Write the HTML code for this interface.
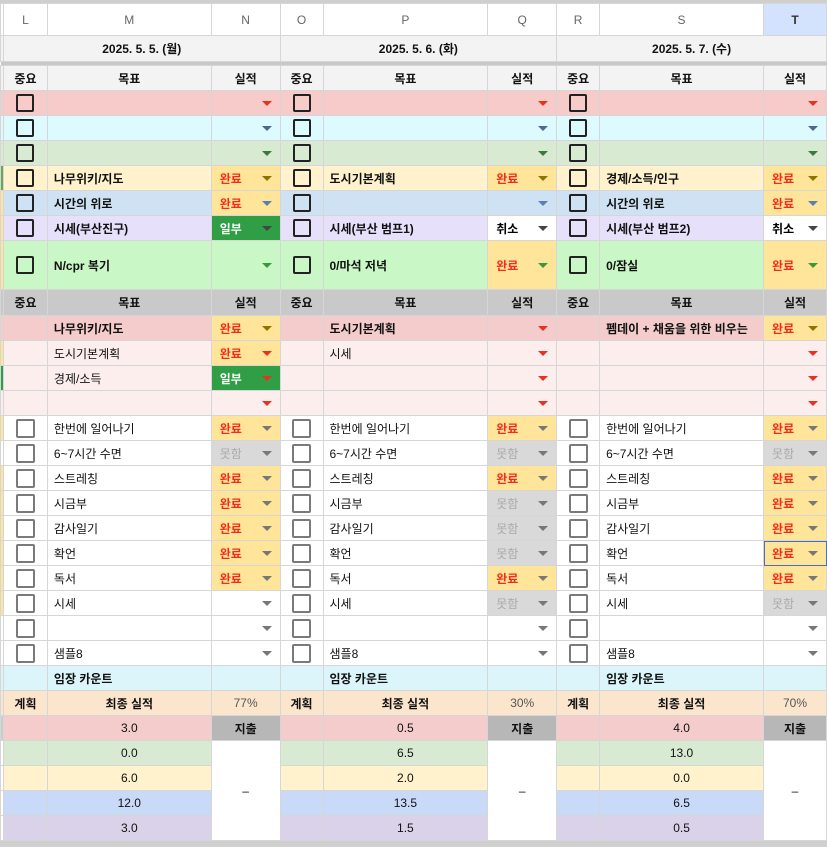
<!DOCTYPE html>
<html><head><meta charset="utf-8"><style>
body{margin:0;background:#cfcfcf;width:827px;height:844px;overflow:hidden;font-family:"Liberation Sans","Noto Sans CJK KR",sans-serif}
table{border-collapse:collapse;table-layout:fixed;margin-top:3px;background:#fff}
td{padding:0;border:1px solid #d6d6d6;font-size:12px;white-space:nowrap;overflow:hidden;color:#111}
.c{text-align:center}
.g{padding-left:6px}
.b{font-weight:bold}
.s{position:relative;padding-left:8px;font-weight:bold}
.s i{position:absolute;right:8px;top:50%;margin-top:-2px;border-left:5px solid transparent;border-right:5px solid transparent;border-top:5px solid var(--a,#777)}
.ok{background:#ffe599;color:#f52a1a;--a:#8b7500}
.no{background:#d9d9d9;color:#aaa;--a:#777;font-weight:normal}
.pt{background:#2f9e44;color:#fff;--a:#111}
.cx{background:#fff;color:#000;--a:#777}
.k{display:inline-block;width:14px;height:14px;border:2px solid #222;border-radius:2px;vertical-align:middle}
.k2{display:inline-block;width:15px;height:15px;border:2px solid #7a7a7a;border-radius:2px;vertical-align:middle}
.hd td{background:#f3f3f3;font-weight:bold;text-align:center}
.hd2 td{background:#c9c9c9;font-weight:bold;text-align:center}
.pk td{background:#f8cbcb;--a:#e8321f}
.cy td{background:#ddfbff;--a:#4a6b8a}
.gr td{background:#d9ead3;--a:#3a7a3a}
.ye td{background:#fff2cc;--a:#8b7500}
.bl td{background:#cfe2f3;--a:#5a7fb0}
.pu td{background:#e6e0fa;--a:#444}
.tg td{background:#c9f7c6;--a:#3a9a3a}
.lp td{background:#fdeeee;--a:#e8321f}
.wh td{background:#fff;--a:#777}
.im td{background:#dcf5fb}
.pe td{background:#fce5cd;font-weight:bold;text-align:center}
tr td.ok{background:#ffe599}
tr td.no{background:#d9d9d9}
tr td.pt{background:#2f9e44}
tr td.cx{background:#fff}
.p1 td{background:#f4cccc}
tr.pk2 td.pkc{background:#f4cccc}
</style></head><body>
<table>
<colgroup><col style="width:3px"><col style="width:44px"><col style="width:164px"><col style="width:69px"><col style="width:43px"><col style="width:165px"><col style="width:69px"><col style="width:43px"><col style="width:164px"><col style="width:63px"></colgroup>
<tr style="height:32px;color:#666"><td></td><td class="c" style="color:#666">L</td><td class="c" style="color:#666">M</td><td class="c" style="color:#666">N</td><td class="c" style="color:#666">O</td><td class="c" style="color:#666">P</td><td class="c" style="color:#666">Q</td><td class="c" style="color:#666">R</td><td class="c" style="color:#666">S</td><td class="c" style="background:#d3e3fd;color:#333;font-weight:bold">T</td></tr>
<tr class="hd" style="height:26px"><td></td><td colspan="3">2025. 5. 5. (월)</td><td colspan="3">2025. 5. 6. (화)</td><td colspan="3">2025. 5. 7. (수)</td></tr>
<tr style="height:4px"><td colspan="10" style="background:#c8c8c8;border:0"></td></tr>
<tr class="hd" style="height:25px"><td></td><td>중요</td><td>목표</td><td>실적</td><td>중요</td><td>목표</td><td>실적</td><td>중요</td><td>목표</td><td>실적</td></tr>
<tr class="pk" style="height:25px"><td></td><td class="c"><b class="k"></b></td><td></td><td class="s"><i></i></td><td class="c"><b class="k"></b></td><td></td><td class="s"><i></i></td><td class="c"><b class="k"></b></td><td></td><td class="s"><i></i></td></tr>
<tr class="cy" style="height:25px"><td></td><td class="c"><b class="k"></b></td><td></td><td class="s"><i></i></td><td class="c"><b class="k"></b></td><td></td><td class="s"><i></i></td><td class="c"><b class="k"></b></td><td></td><td class="s"><i></i></td></tr>
<tr class="gr" style="height:25px"><td></td><td class="c"><b class="k"></b></td><td></td><td class="s"><i></i></td><td class="c"><b class="k"></b></td><td></td><td class="s"><i></i></td><td class="c"><b class="k"></b></td><td></td><td class="s"><i></i></td></tr>
<tr class="ye" style="height:25px"><td style="background:#6aa84f"></td><td class="c"><b class="k"></b></td><td class="g b">나무위키/지도</td><td class="s ok">완료<i></i></td><td class="c"><b class="k"></b></td><td class="g b">도시기본계획</td><td class="s ok">완료<i></i></td><td class="c"><b class="k"></b></td><td class="g b">경제/소득/인구</td><td class="s ok">완료<i></i></td></tr>
<tr class="bl" style="height:25px"><td style="background:#ffe599"></td><td class="c"><b class="k"></b></td><td class="g b">시간의 위로</td><td class="s ok">완료<i></i></td><td class="c"><b class="k"></b></td><td></td><td class="s"><i></i></td><td class="c"><b class="k"></b></td><td class="g b">시간의 위로</td><td class="s ok">완료<i></i></td></tr>
<tr class="pu" style="height:25px"><td style="background:#ffe599"></td><td class="c"><b class="k"></b></td><td class="g b">시세(부산진구)</td><td class="s pt">일부<i></i></td><td class="c"><b class="k"></b></td><td class="g b">시세(부산 범프1)</td><td class="s cx">취소<i></i></td><td class="c"><b class="k"></b></td><td class="g b">시세(부산 범프2)</td><td class="s cx">취소<i></i></td></tr>
<tr class="tg" style="height:49px"><td style="background:#ffe599"></td><td class="c"><b class="k"></b></td><td class="g b">N/cpr 복기</td><td class="s"><i></i></td><td class="c"><b class="k"></b></td><td class="g b">0/마석 저녁</td><td class="s ok">완료<i></i></td><td class="c"><b class="k"></b></td><td class="g b">0/잠실</td><td class="s ok">완료<i></i></td></tr>
<tr class="hd2" style="height:26px"><td></td><td>중요</td><td>목표</td><td>실적</td><td>중요</td><td>목표</td><td>실적</td><td>중요</td><td>목표</td><td>실적</td></tr>
<tr class="p1" style="height:25px;--a:#e8321f"><td></td><td></td><td class="g b">나무위키/지도</td><td class="s ok">완료<i></i></td><td></td><td class="g b">도시기본계획</td><td class="s" style="--a:#e8321f"><i></i></td><td></td><td class="g b">펨데이 + 채움을 위한 비우는</td><td class="s ok">완료<i></i></td></tr>
<tr class="lp" style="height:25px"><td style="background:#ffe599"></td><td></td><td class="g">도시기본계획</td><td class="s ok">완료<i></i></td><td></td><td class="g">시세</td><td class="s"><i></i></td><td></td><td></td><td class="s"><i></i></td></tr>
<tr class="lp" style="height:25px"><td style="background:#2f9e44"></td><td></td><td class="g">경제/소득</td><td class="s pt">일부<i></i></td><td></td><td></td><td class="s"><i></i></td><td></td><td></td><td class="s"><i></i></td></tr>
<tr class="lp" style="height:25px"><td></td><td></td><td></td><td class="s"><i></i></td><td></td><td></td><td class="s"><i></i></td><td></td><td></td><td class="s"><i></i></td></tr>
<tr class="wh" style="height:25px"><td style="background:#ffe599"></td><td class="c"><b class="k2"></b></td><td class="g">한번에 일어나기</td><td class="s ok">완료<i></i></td><td class="c"><b class="k2"></b></td><td class="g">한번에 일어나기</td><td class="s ok">완료<i></i></td><td class="c"><b class="k2"></b></td><td class="g">한번에 일어나기</td><td class="s ok">완료<i></i></td></tr>
<tr class="wh" style="height:25px"><td></td><td class="c"><b class="k2"></b></td><td class="g">6~7시간 수면</td><td class="s no">못함<i></i></td><td class="c"><b class="k2"></b></td><td class="g">6~7시간 수면</td><td class="s no">못함<i></i></td><td class="c"><b class="k2"></b></td><td class="g">6~7시간 수면</td><td class="s no">못함<i></i></td></tr>
<tr class="wh" style="height:25px"><td style="background:#ffe599"></td><td class="c"><b class="k2"></b></td><td class="g">스트레칭</td><td class="s ok">완료<i></i></td><td class="c"><b class="k2"></b></td><td class="g">스트레칭</td><td class="s ok">완료<i></i></td><td class="c"><b class="k2"></b></td><td class="g">스트레칭</td><td class="s ok">완료<i></i></td></tr>
<tr class="wh" style="height:25px"><td style="background:#ffe599"></td><td class="c"><b class="k2"></b></td><td class="g">시금부</td><td class="s ok">완료<i></i></td><td class="c"><b class="k2"></b></td><td class="g">시금부</td><td class="s no">못함<i></i></td><td class="c"><b class="k2"></b></td><td class="g">시금부</td><td class="s ok">완료<i></i></td></tr>
<tr class="wh" style="height:25px"><td style="background:#ffe599"></td><td class="c"><b class="k2"></b></td><td class="g">감사일기</td><td class="s ok">완료<i></i></td><td class="c"><b class="k2"></b></td><td class="g">감사일기</td><td class="s no">못함<i></i></td><td class="c"><b class="k2"></b></td><td class="g">감사일기</td><td class="s ok">완료<i></i></td></tr>
<tr class="wh" style="height:25px"><td style="background:#ffe599"></td><td class="c"><b class="k2"></b></td><td class="g">확언</td><td class="s ok">완료<i></i></td><td class="c"><b class="k2"></b></td><td class="g">확언</td><td class="s no">못함<i></i></td><td class="c"><b class="k2"></b></td><td class="g">확언</td><td class="s ok" style="outline:1px solid #4a6fb5;outline-offset:-1px">완료<i></i></td></tr>
<tr class="wh" style="height:25px"><td style="background:#ffe599"></td><td class="c"><b class="k2"></b></td><td class="g">독서</td><td class="s ok">완료<i></i></td><td class="c"><b class="k2"></b></td><td class="g">독서</td><td class="s ok">완료<i></i></td><td class="c"><b class="k2"></b></td><td class="g">독서</td><td class="s ok">완료<i></i></td></tr>
<tr class="wh" style="height:25px"><td style="background:#ffe599"></td><td class="c"><b class="k2"></b></td><td class="g">시세</td><td class="s"><i></i></td><td class="c"><b class="k2"></b></td><td class="g">시세</td><td class="s no">못함<i></i></td><td class="c"><b class="k2"></b></td><td class="g">시세</td><td class="s no">못함<i></i></td></tr>
<tr class="wh" style="height:25px"><td></td><td class="c"><b class="k2"></b></td><td></td><td class="s"><i></i></td><td class="c"><b class="k2"></b></td><td></td><td class="s"><i></i></td><td class="c"><b class="k2"></b></td><td></td><td class="s"><i></i></td></tr>
<tr class="wh" style="height:25px"><td></td><td class="c"><b class="k2"></b></td><td class="g">샘플8</td><td class="s"><i></i></td><td class="c"><b class="k2"></b></td><td class="g">샘플8</td><td class="s"><i></i></td><td class="c"><b class="k2"></b></td><td class="g">샘플8</td><td class="s"><i></i></td></tr>
<tr class="im" style="height:25px"><td></td><td></td><td class="g b">임장 카운트</td><td></td><td></td><td class="g b">임장 카운트</td><td></td><td></td><td class="g b">임장 카운트</td><td></td></tr>
<tr class="pe" style="height:25px"><td></td><td>계획</td><td>최종 실적</td><td style="font-weight:normal;color:#555">77%</td><td>계획</td><td>최종 실적</td><td style="font-weight:normal;color:#555">30%</td><td>계획</td><td>최종 실적</td><td style="font-weight:normal;color:#555">70%</td></tr>
<tr style="height:25px"><td style="background:#ccc"></td><td style="background:#f4cccc"></td><td class="c" style="background:#f4cccc">3.0</td><td class="c b" style="background:#b7b7b7">지출</td><td style="background:#f4cccc"></td><td class="c" style="background:#f4cccc">0.5</td><td class="c b" style="background:#b7b7b7">지출</td><td style="background:#f4cccc"></td><td class="c" style="background:#f4cccc">4.0</td><td class="c b" style="background:#b7b7b7">지출</td></tr>
<tr style="height:25px"><td></td><td style="background:#d9ead3"></td><td class="c" style="background:#d9ead3">0.0</td><td rowspan="4" class="c" style="background:#fff">–</td><td style="background:#d9ead3"></td><td class="c" style="background:#d9ead3">6.5</td><td rowspan="4" class="c" style="background:#fff">–</td><td style="background:#d9ead3"></td><td class="c" style="background:#d9ead3">13.0</td><td rowspan="4" class="c" style="background:#fff">–</td></tr>
<tr style="height:25px"><td></td><td style="background:#fff2cc"></td><td class="c" style="background:#fff2cc">6.0</td><td style="background:#fff2cc"></td><td class="c" style="background:#fff2cc">2.0</td><td style="background:#fff2cc"></td><td class="c" style="background:#fff2cc">0.0</td></tr>
<tr style="height:25px"><td></td><td style="background:#c9daf8"></td><td class="c" style="background:#c9daf8">12.0</td><td style="background:#c9daf8"></td><td class="c" style="background:#c9daf8">13.5</td><td style="background:#c9daf8"></td><td class="c" style="background:#c9daf8">6.5</td></tr>
<tr style="height:25px"><td></td><td style="background:#d9d2e9"></td><td class="c" style="background:#d9d2e9">3.0</td><td style="background:#d9d2e9"></td><td class="c" style="background:#d9d2e9">1.5</td><td style="background:#d9d2e9"></td><td class="c" style="background:#d9d2e9">0.5</td></tr>
</table>
</body></html>
